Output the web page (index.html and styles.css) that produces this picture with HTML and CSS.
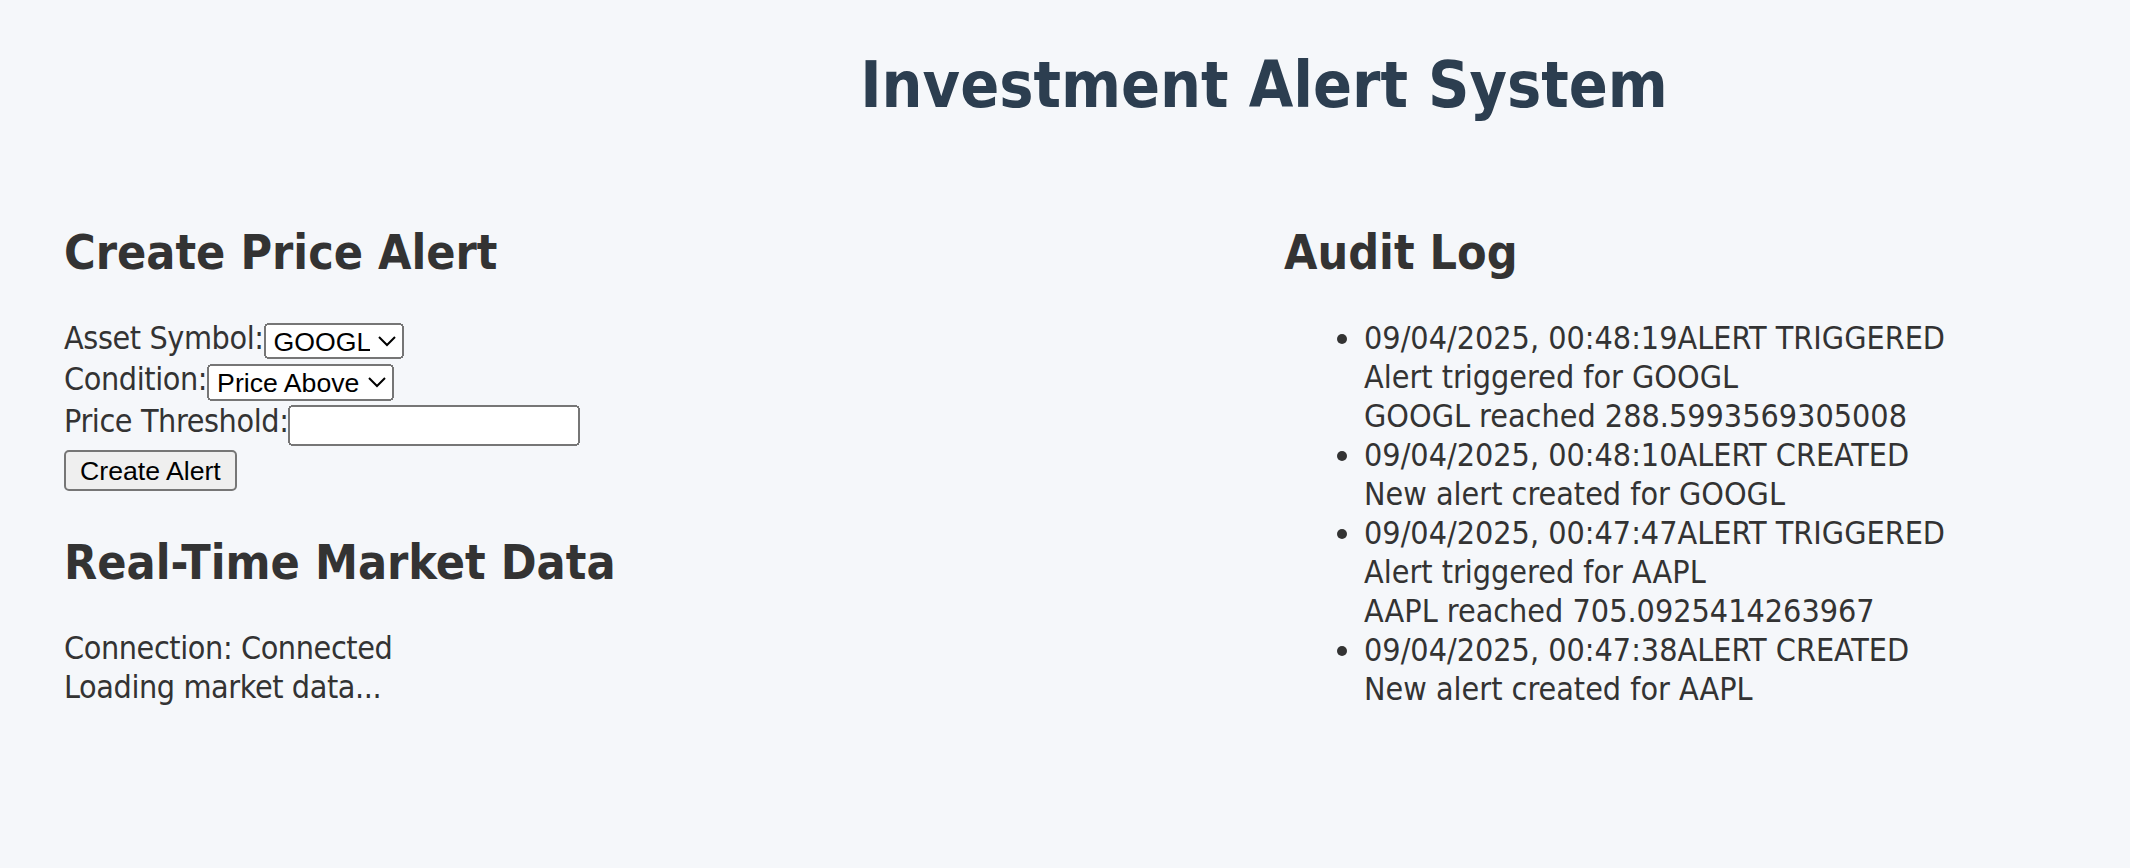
FILE: index.html
```html
<!DOCTYPE html>
<html lang="en">
<head>
<meta charset="utf-8">
<title>Investment Alert System</title>
<link rel="stylesheet" href="styles.css">
</head>
<body>
<div class="app">
  <h1 class="title">Investment Alert System</h1>
  <div class="columns">
    <section class="panel">
      <h2 class="panel-title">Create Price Alert</h2>
      <form class="alert-form">
        <div class="field"><label class="field-label" for="symbol">Asset Symbol:</label><select id="symbol" class="control select-symbol"><option>GOOGL</option><option>AAPL</option><option>MSFT</option><option>TSLA</option></select></div>
        <div class="field"><label class="field-label" for="condition">Condition:</label><select id="condition" class="control select-condition"><option>Price Above</option><option>Price Below</option></select></div>
        <div class="field field-tall"><label class="field-label" for="threshold">Price Threshold:</label><input id="threshold" class="control input-threshold" type="number"></div>
        <button type="button" class="control submit-button">Create Alert</button>
      </form>
      <h2 class="panel-title">Real-Time Market Data</h2>
      <div class="market">
        <div class="market-line">Connection: Connected</div>
        <div class="market-line">Loading market data...</div>
      </div>
    </section>
    <section class="panel">
      <h2 class="panel-title">Audit Log</h2>
      <ul class="log">
        <li class="log-item"><span class="log-time">09/04/2025, 00:48:19</span><span class="log-type">ALERT TRIGGERED</span><div class="log-message">Alert triggered for GOOGL</div><div class="log-details">GOOGL reached 288.5993569305008</div></li>
        <li class="log-item"><span class="log-time">09/04/2025, 00:48:10</span><span class="log-type">ALERT CREATED</span><div class="log-message">New alert created for GOOGL</div></li>
        <li class="log-item"><span class="log-time">09/04/2025, 00:47:47</span><span class="log-type">ALERT TRIGGERED</span><div class="log-message">Alert triggered for AAPL</div><div class="log-details">AAPL reached 705.0925414263967</div></li>
        <li class="log-item"><span class="log-time">09/04/2025, 00:47:38</span><span class="log-type">ALERT CREATED</span><div class="log-message">New alert created for AAPL</div></li>
      </ul>
    </section>
  </div>
</div>
</body>
</html>
```
FILE: styles.css
```css
html {
  background: #f5f7fa;
}

body {
  zoom: 2;
  margin: 0;
  padding: 0 32px;
  background: #f5f7fa;
  color: #333;
  font-family: "DejaVu Sans Condensed", "DejaVu Sans", Tahoma, sans-serif;
  font-stretch: condensed;
  font-size: 16px;
  line-height: 19.5px;
  overflow-x: hidden;
}

.app {
  width: 1200px;
}

.title {
  font-size: 32px;
  font-weight: bold;
  line-height: 38.5px;
  color: #2c3e50;
  text-align: center;
  margin: 21.85px 0 28.63px;
  padding-top: 1.75px;
}

.columns {
  display: grid;
  grid-template-columns: 1fr 1fr;
  gap: 20px;
}

.panel-title {
  font-size: 24px;
  font-weight: bold;
  line-height: 29px;
  margin: 19.92px 0 18px;
  padding-top: 1px;
}

.alert-form {
  margin: 0;
  display: flex;
  flex-direction: column;
  align-items: flex-start;
}

.field {
  display: flex;
  align-items: flex-start;
  height: 20.85px;
}

.field-tall {
  height: 22.5px;
}

.field-label {
  padding-top: 0.75px;
  letter-spacing: -0.2px;
}

.control {
  font-family: "Liberation Sans", Arial, sans-serif;
  font-size: 13.333px;
  box-sizing: border-box;
  margin: 0;
}

.select-symbol {
  width: 70.35px;
  height: 18.15px;
  margin-top: 2.7px;
}

.select-condition {
  width: 93.2px;
  height: 18.15px;
  margin-top: 2.7px;
}

.input-threshold {
  width: 146px;
  height: 20.5px;
  margin-top: 2px;
}

.submit-button {
  white-space: nowrap;
  padding: 1px 6px;
  height: 20.85px;
  margin-top: 2px;
}

.market {
  padding-top: 0.75px;
}

.market-line {
  letter-spacing: -0.2px;
}

.log {
  margin: 0;
  padding: 0.75px 0 0 40px;
}
```
